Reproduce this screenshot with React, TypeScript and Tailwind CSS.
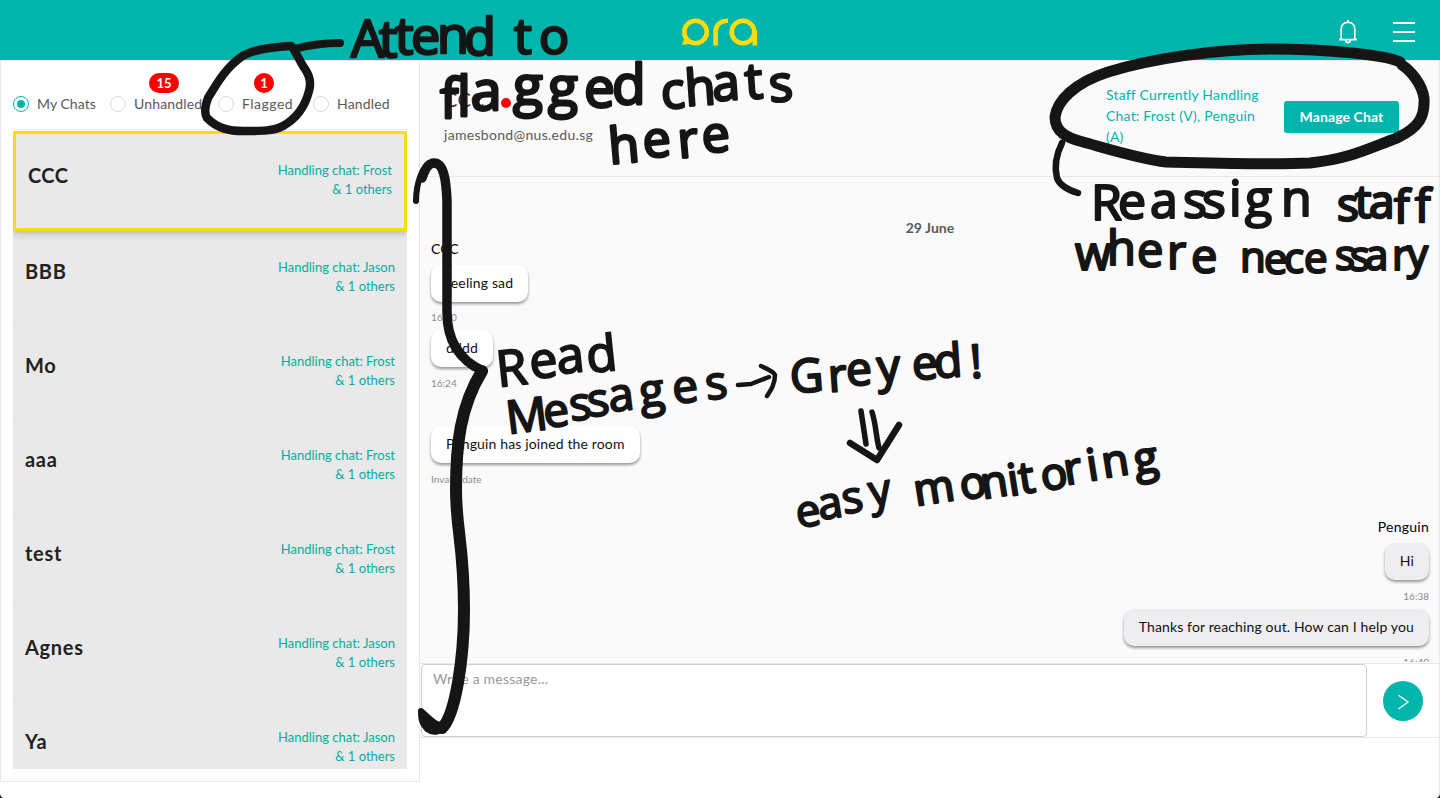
import React from "react";

const filters = [
  { label: "My Chats", x: "w-[97px]", tracking: "tracking-[0.05px]", active: true },
  { label: "Unhandled", x: "w-[108px]", tracking: "tracking-[0.15px]", badge: "15" },
  { label: "Flagged", x: "w-[95px]", tracking: "tracking-[0.5px]", badge: "1" },
  { label: "Handled", x: "w-[90px]", tracking: "tracking-[0.15px]" },
];

const chats = [
  { name: "BBB", staff: "Jason" },
  { name: "Mo", staff: "Frost" },
  { name: "aaa", staff: "Frost" },
  { name: "test", staff: "Frost" },
  { name: "Agnes", staff: "Jason" },
  { name: "Ya", staff: "Jason" },
];

function Logo() {
  return (
    <svg width="78" height="32" viewBox="0 0 78 32" fill="none" stroke="#fcdc0c" strokeWidth="4.6">
      <circle cx="14.500" cy="16" r="11.3" />
      <path d="M1.2 29 4 19.500l8 8z" fill="#fcdc0c" stroke="none" />
      <path d="M34.6 29.500V16c0-6.500 4-11.3 12.4-11.3" />
      <circle cx="62" cy="16" r="11.3" />
      <path d="M73.8 15v14.500" />
    </svg>
  );
}

function Bell() {
  return (
    <svg width="20" height="26" viewBox="0 0 20 26" fill="none" stroke="white" strokeWidth="1.7">
      <path d="M10 1v2M3.2 20V10.2C3.2 6 6 3.4 10 3.4s6.8 2.6 6.8 6.8V20M1 20.6h18M7.6 21.4c.2 1.4 1.2 2.1 2.4 2.1s2.2-.7 2.4-2.1" />
    </svg>
  );
}

function StaffLabel({ staff }: { staff: string }) {
  return (
    <div className="text-right text-[13px] leading-[19px] text-[#08ad9f]">
      <div>Handling chat: {staff}</div>
      <div>&amp; 1 others</div>
    </div>
  );
}

function Bubble({ children, mine }: { children: React.ReactNode; mine?: boolean }) {
  return (
    <div
      className={
        "h-[37px] rounded-[10px] px-[15px] text-[14px] leading-[35px] tracking-[0.14px] whitespace-nowrap text-[#111] shadow-[0_2px_3px_rgba(0,0,0,0.4)] " +
        (mine ? "bg-[#eeeef0]" : "bg-white")
      }
    >
      {children}
    </div>
  );
}

type Word = { t: string; x: string; y: string; s: number; r?: string; sw: number };

const words: Word[] = [
  { t: "Attend", x: "351 379 395 411 437 464", y: "57 57 54 54 53 55", s: 52, sw: 2.6 },
  { t: "to", x: "514 539", y: "54 54", s: 50, r: "0", sw: 2.6 },
  { t: "flagged", x: "440 457 471 513 548 584 612", y: "118 116 110 105 106 107 104", s: 55, sw: 2.8, r: "0" },
  { t: "chats", x: "662 686 713 746 770", y: "109 106 101 99 102", s: 50, sw: 2.6, r: "-4" },
  { t: "here", x: "610 644 679 703", y: "164 158 158 153", s: 50, sw: 2.8, r: "-5" },
  { t: "Reassign", x: "1091 1118 1150 1183 1202 1229 1245 1281", y: "220 219 218 218 218 216 216 216", s: 50, sw: 2.2, r: "0" },
  { t: "staff", x: "1337 1355 1369 1394 1415", y: "221 218 218 223 222", s: 46, sw: 2.4, r: "0" },
  { t: "where", x: "1075 1107 1137 1167 1191", y: "270 265 267 269 273", s: 47, sw: 2.2, r: "0" },
  { t: "necessary", x: "1240 1264 1284 1304 1335 1350 1365 1392 1407", y: "272 274 273 273 270 271 270 270 269", s: 42, sw: 2.2, r: "0" },
  { t: "Read", x: "498 531 558 588", y: "387 379 374 373", s: 50, sw: 2, r: "-6" },
  { t: "Messages", x: "508 545 571 589 610 641 674 707", y: "434 428 421 417 412 408 404 400", s: 46, sw: 2, r: "-7" },
  { t: "Greyed!", x: "791 829 847 878 913 935 971", y: "393 392 386 383 380 378 378", s: 46, sw: 2.2, r: "-4" },
  { t: "easy", x: "798 820 844 871", y: "528 520 514 507", s: 44, sw: 2, r: "-9" },
  { t: "monitoring", x: "916 962 983 1010 1021 1043 1066 1089 1104 1136", y: "506 500 499 496 494 491 485 481 478 475", s: 44, sw: 2.4, r: "-9" },
];

function Annotations() {
  return (
    <svg className="pointer-events-none absolute inset-0" width="1440" height="798" viewBox="0 0 1440 798">
      <g fill="none" stroke="#151515" strokeLinecap="round" strokeLinejoin="round">
        <path strokeWidth="8.5" d="M291 46C273 47 254 50 244 55C226 67 217 83 208 98C205 106 204 113 207 118C218 129 230 131 243 131C262 131 274 131 283 126C299 117 306 103 309 91C312 80 308 73 303 66L293 48" />
        <path strokeWidth="8" d="M294 49C309 45 325 43 340 43" />
        <path strokeWidth="11" d="M1400 62C1385 55 1330 49 1270 49C1215 49 1150 59 1108 72C1074 83 1057 101 1055 117C1055 132 1067 138 1083 142C1105 148 1140 159 1166 162C1210 163 1270 165 1310 163C1350 159 1372 147 1397 138C1420 127 1425 116 1424 98C1422 84 1411 71 1402 65" />
        <path strokeWidth="6.5" d="M1062 143C1055 157 1055 170 1057 178C1060 186 1068 190 1078 193" />
        <path strokeWidth="6" d="M416 201C416 185 422 163 434 162" />
        <path strokeWidth="9.5" d="M422 178C425 169 429 163 434 163C443 163 446 177 447 201V312C447 340 459 360 483 371" />
        <path strokeWidth="12" d="M482 371C460 407 456 445 456 490C456 530 464 544 464 610C464 660 455 716 442 728" />
        <path strokeWidth="6" fill="#151515" d="M421 711C430 719 438 729 446 723C442 732 434 734 427 729C421 723 421 717 421 711Z" />
        <path strokeWidth="4.5" d="M738 385L751 384L769 377M761 366C768 369 774 372 775 375C775 384 771 390 767 396" />
        <path strokeWidth="5.5" d="M861 411L866 444M872 412C876 424 876 437 879 448" />
        <path strokeWidth="6.500" d="M850 443L877 460L899 425" />
      </g>
      <g fill="#151515" stroke="#151515" strokeLinejoin="round" fontFamily='"Open Sans", "Noto Sans", sans-serif'>
        {words.map((w) => (
          <text key={w.t} x={w.x} y={w.y} rotate={w.r} fontSize={w.s} strokeWidth={w.sw}>
            {w.t}
          </text>
        ))}
      </g>
      <path d="M0 793C0 796 2 798 5 798H0ZM1440 793C1440 796 1438 798 1435 798H1440Z" fill="#222" />
    </svg>
  );
}

export default function App() {
  return (
    <div className="relative flex h-[798px] w-[1440px] flex-col overflow-hidden bg-white font-['Lato','Noto_Sans',sans-serif]">
      <header className="grid h-[60px] shrink-0 grid-cols-3 items-center bg-[#00b5ab]">
        <div />
        <div className="flex justify-center pt-1">
          <Logo />
        </div>
        <div className="flex items-center justify-end gap-[35px] pt-1 pr-[25px]">
          <Bell />
          <div className="flex w-[22px] flex-col gap-[7px]">
            <span className="h-0.5 bg-white" />
            <span className="h-0.5 bg-white" />
            <span className="h-0.5 bg-white" />
          </div>
        </div>
      </header>

      <main className="flex min-h-0 flex-1">
        <aside className="flex h-[722px] w-[420px] shrink-0 flex-col border border-[#e8e8e8] px-3 pb-3">
          <div className="flex h-[69px] shrink-0 items-end border-b border-[#e8e8e8] pb-[16px]">
            {filters.map((f) => (
              <label key={f.label} className={"flex shrink-0 items-center gap-2 " + f.x}>
                <span
                  className={
                    "flex size-4 shrink-0 items-center justify-center rounded-full border bg-white " +
                    (f.active ? "border-[#00b5ab]" : "border-[#d9d9d9]")
                  }
                >
                  {f.active && <span className="size-2 rounded-full bg-[#00b5ab]" />}
                </span>
                <span className={"relative pb-px text-[14px] leading-[17px] whitespace-nowrap text-[#595959] " + f.tracking}>
                  {f.label}
                  {f.badge && (
                    <span
                      className={
                        "absolute -top-[22px] flex h-5 items-center justify-center rounded-full bg-[#ff0000] text-[13px] font-bold tracking-normal text-white " +
                        (f.badge === "15" ? "left-[15px] w-[30px]" : "left-[12px] w-5")
                      }
                    >
                      {f.badge}
                    </span>
                  )}
                </span>
              </label>
            ))}
          </div>
          <div className="mt-px min-h-0 flex-1 overflow-hidden bg-[#e9e9e9]">
            <div className="relative flex h-[100px] justify-between border-[3px] border-[#fcdc0c] px-3 pt-[27px] shadow-[0_2px_8px_rgba(0,0,0,0.25)]">
              <div className="text-[20px] leading-[28px] font-bold tracking-[0.4px] text-[#222]">CCC</div>
              <StaffLabel staff="Frost" />
            </div>
            {chats.map((c) => (
              <div key={c.name} className="flex h-[94px] justify-between border-b border-[#e6e6e6] px-3 pt-[27px]">
                <div className="text-[20px] leading-[26px] font-bold tracking-[0.7px] text-[#222]">{c.name}</div>
                <StaffLabel staff={c.staff} />
              </div>
            ))}
          </div>
        </aside>

        <section className="flex min-w-0 flex-1 flex-col border-r border-[#e8e8e8]">
          <div className="flex h-[117px] shrink-0 items-start justify-between border-t border-b border-[#e8e8e8] bg-[#fafafa] pr-10 pl-6">
            <div className="pt-[22px]">
              <div className="flex items-center gap-[17px]">
                <span className="text-[20px] leading-[32px] tracking-[0.3px] text-[#333]">CCC</span>
                <span className="mt-2 size-2.5 rounded-full bg-[#ff0000]" />
              </div>
              <div className="mt-[10px] text-[14px] leading-[20px] tracking-[0.3px] text-[#595959]">jamesbond@nus.edu.sg</div>
            </div>
            <div className="flex items-start pt-[23px]">
              <div className="w-[178px] text-[14px] leading-[21px] tracking-[0.2px] text-[#00b5ab]">
                <div>Staff Currently Handling</div>
                <div>Chat: Frost (V), Penguin</div>
                <div>(A)</div>
              </div>
              <button className="mt-[17px] h-8 w-[115px] rounded-[3px] bg-[#00b5ab] pb-0.5 text-[14px] font-bold tracking-[0.1px] text-white">
                Manage Chat
              </button>
            </div>
          </div>

          <div className="flex h-[485px] shrink-0 flex-col overflow-hidden bg-[#fafafa] px-[11px] pr-[10px]">
            <div className="mt-[41px] text-center text-[14px] leading-5 font-bold tracking-[0.05px] text-[#595959]">29 June</div>
            <div className="flex flex-col items-start">
              <div className="mt-px mb-[6px] text-[14px] leading-5 text-black">CCC</div>
              <Bubble>feeling sad</Bubble>
              <div className="mt-2 mb-[6px] text-[10px] leading-[14px] text-[#8c8c8c]">16:20</div>
              <Bubble>dddd</Bubble>
              <div className="mt-[9px] mb-[36px] text-[10px] leading-[14px] text-[#8c8c8c]">16:24</div>
              <Bubble>Penguin has joined the room</Bubble>
              <div className="mt-[9px] text-[10px] leading-[14px] text-[#8c8c8c]">Invalid date</div>
            </div>
            <div className="flex flex-col items-end">
              <div className="mt-[31px] mb-[6px] text-[14px] leading-5 tracking-[0.25px] text-black">Penguin</div>
              <Bubble mine>Hi</Bubble>
              <div className="mt-[9px] mb-[6px] text-[10px] leading-[14px] text-[#8c8c8c]">16:38</div>
              <Bubble mine>Thanks for reaching out. How can I help you</Bubble>
              <div className="mt-[9px] text-[10px] leading-[14px] text-[#8c8c8c]">16:40</div>
            </div>
          </div>

          <div className="mt-px flex h-[75px] shrink-0 border-y border-[#e8e8e8]">
            <div className="ml-px h-[73px] w-[946px] rounded-[4px] border border-[#d0d0d0] bg-white px-[11px] pt-[4px] text-[14px] leading-5 tracking-[0.22px] text-[#999]">
              Write a message...
            </div>
            <button className="mt-[17px] ml-4 flex size-10 items-center justify-center rounded-full bg-[#00b5ab]">
              <svg width="14" height="18" viewBox="0 0 14 18" fill="none" stroke="white" strokeWidth="1.3">
                <path d="M2.5 3.2 12 10 2.5 17" />
              </svg>
            </button>
          </div>
        </section>
      </main>
      <Annotations />
    </div>
  );
}
